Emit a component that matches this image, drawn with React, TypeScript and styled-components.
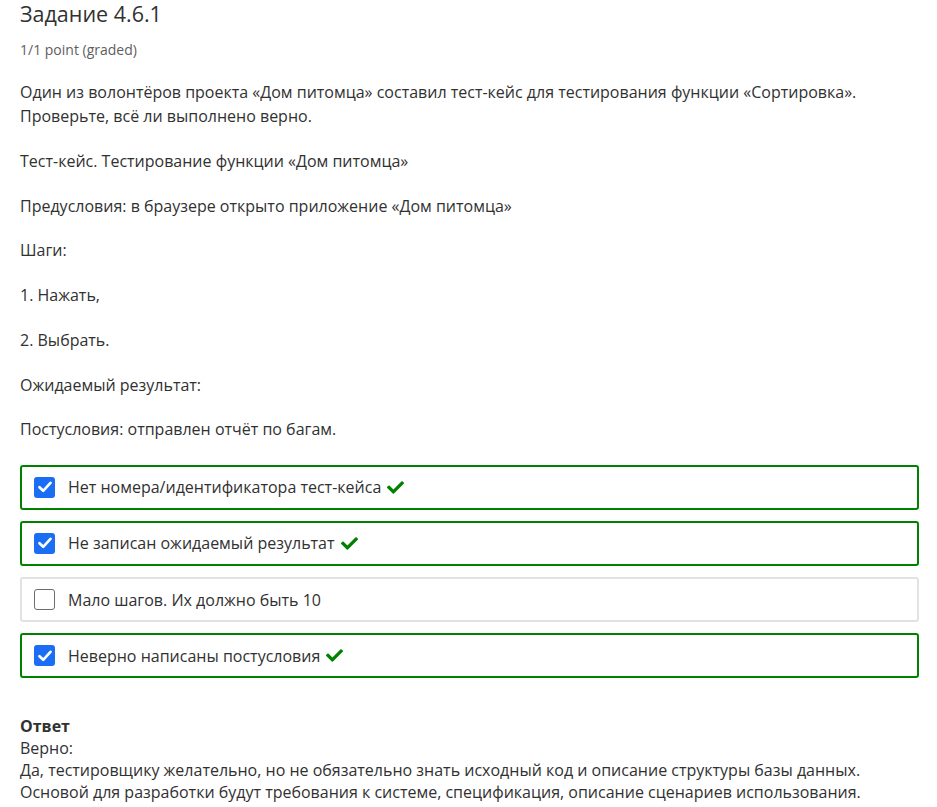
import styled, { createGlobalStyle } from "styled-components";
import { FaCheck } from "react-icons/fa";

const GlobalStyle = createGlobalStyle`
  body {
    margin: 0;
    background: #fff;
    font-family: "Open Sans", "Noto Sans", sans-serif;
    color: #313131;
  }
`;

type Choice = { text: string; checked: boolean; correct: boolean };

const choices: Choice[] = [
  { text: "Нет номера/идентификатора тест-кейса", checked: true, correct: true },
  { text: "Не записан ожидаемый результат", checked: true, correct: true },
  { text: "Мало шагов. Их должно быть 10", checked: false, correct: false },
  { text: "Неверно написаны постусловия", checked: true, correct: true },
];

const paragraphs = [
  "Тест-кейс. Тестирование функции «Дом питомца»",
  "Предусловия: в браузере открыто приложение «Дом питомца»",
  "Шаги:",
  "1. Нажать,",
  "2. Выбрать.",
  "Ожидаемый результат:",
  "Постусловия: отправлен отчёт по багам.",
];

export default function App() {
  return (
    <>
      <GlobalStyle />
      <Problem>
        <Title>Задание 4.6.1</Title>
        <Score>1/1 point (graded)</Score>
        <Text>
          Один из волонтёров проекта «Дом питомца» составил тест-кейс для тестирования функции «Сортировка».
          <br />
          Проверьте, всё ли выполнено верно.
        </Text>
        {paragraphs.map((p) => (
          <Text key={p}>{p}</Text>
        ))}
        <Choices>
          {choices.map((c) => (
            <Option key={c.text} $checked={c.checked}>
              <Box $checked={c.checked}>
                {c.checked && (
                  <svg width="14" height="12" viewBox="0 0 14 12">
                    <path d="M1.5 6.2 L5.2 9.8 L12.5 1.8" fill="none" stroke="#fff" strokeWidth="2.6" strokeLinecap="round" strokeLinejoin="round" />
                  </svg>
                )}
              </Box>
              <span>{c.text}</span>
              {c.correct && (
                <Mark>
                  <FaCheck size={17} />
                </Mark>
              )}
            </Option>
          ))}
        </Choices>
        <Answer>
          <strong>Ответ</strong>
          <br />
          Верно:
          <br />
          Да, тестировщику желательно, но не обязательно знать исходный код и описание структуры базы данных.
          <br />
          Основой для разработки будут требования к системе, спецификация, описание сценариев использования.
        </Answer>
      </Problem>
    </>
  );
}

const Problem = styled.div`
  padding: 0 18px 0 20px;
`;

const Title = styled.h3`
  margin: 0;
  font-size: 21.5px;
  font-weight: 400;
  line-height: 28px;
  color: #313131;
`;

const Score = styled.div`
  margin: 12px 0 20px;
  font-size: 14px;
  line-height: 20px;
  color: #5e5e5e;
`;

const Text = styled.p`
  margin: 0 0 20.75px;
  font-size: 16px;
  line-height: 24px;
`;

const Choices = styled.div`
  display: flex;
  flex-direction: column;
  gap: 11.2px;
  margin-top: 23.5px;
`;

const Option = styled.label<{ $checked: boolean }>`
  display: flex;
  align-items: center;
  height: 45px;
  box-sizing: border-box;
  padding: 0 12px;
  border: 2px solid ${(p) => (p.$checked ? "#008100" : "#e2e2e2")};
  border-radius: 3px;
  font-size: 16px;
  color: #313131;
`;

const Box = styled.span<{ $checked: boolean }>`
  display: flex;
  align-items: center;
  justify-content: center;
  width: 21px;
  height: 21px;
  box-sizing: border-box;
  margin-right: 13px;
  border-radius: 3px;
  background: ${(p) => (p.$checked ? "#1b6ef3" : "#fff")};
  border: ${(p) => (p.$checked ? "none" : "1px solid #6d6d6d")};
`;

const Mark = styled.span`
  display: inline-flex;
  margin-left: 6px;
  color: #008100;
`;

const Answer = styled.div`
  margin-top: 38px;
  font-size: 16px;
  line-height: 21.75px;

  strong {
    font-weight: 700;
  }
`;
